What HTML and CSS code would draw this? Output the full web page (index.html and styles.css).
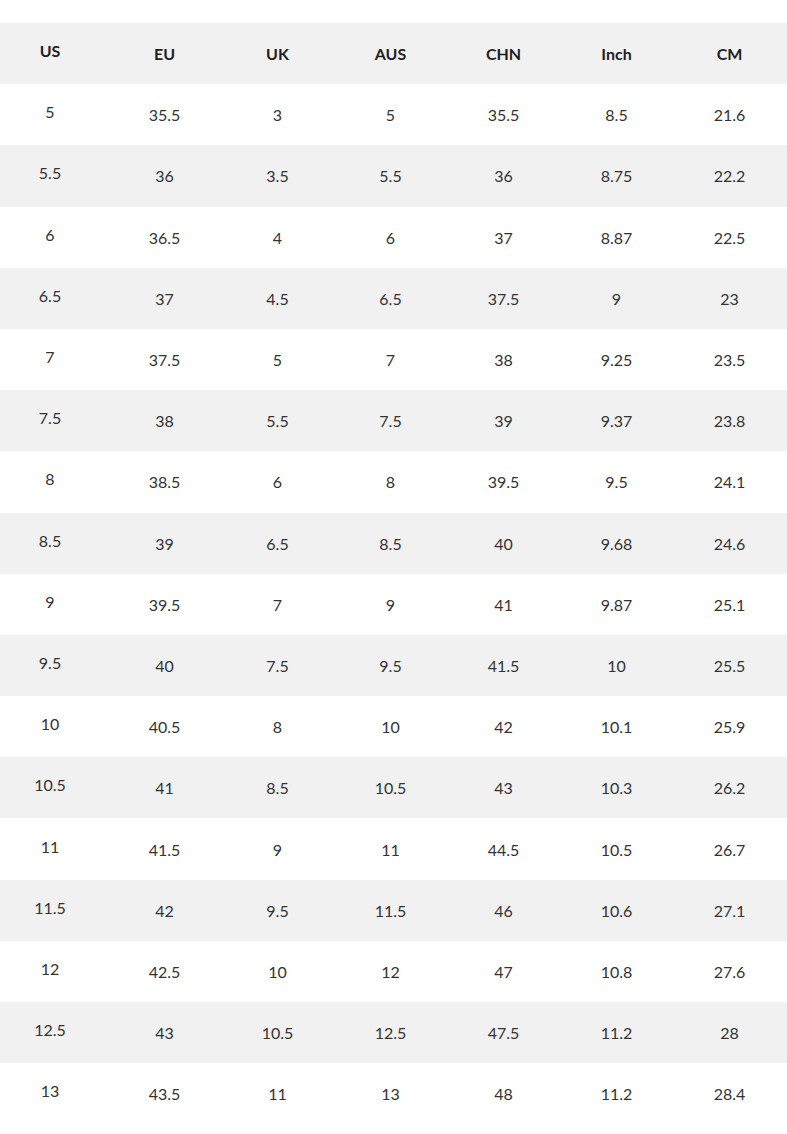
FILE: index.html
```html
<!DOCTYPE html>
<html>
<head>
<meta charset="utf-8">
<link rel="stylesheet" href="styles.css">
</head>
<body>
<div class="table">
  <div class="row head"><div class="c first">US</div><div class="c">EU</div><div class="c">UK</div><div class="c">AUS</div><div class="c">CHN</div><div class="c">Inch</div><div class="c">CM</div></div>
  <div class="row"><div class="c first">5</div><div class="c">35.5</div><div class="c">3</div><div class="c">5</div><div class="c">35.5</div><div class="c">8.5</div><div class="c">21.6</div></div>
  <div class="row alt"><div class="c first">5.5</div><div class="c">36</div><div class="c">3.5</div><div class="c">5.5</div><div class="c">36</div><div class="c">8.75</div><div class="c">22.2</div></div>
  <div class="row"><div class="c first">6</div><div class="c">36.5</div><div class="c">4</div><div class="c">6</div><div class="c">37</div><div class="c">8.87</div><div class="c">22.5</div></div>
  <div class="row alt"><div class="c first">6.5</div><div class="c">37</div><div class="c">4.5</div><div class="c">6.5</div><div class="c">37.5</div><div class="c">9</div><div class="c">23</div></div>
  <div class="row"><div class="c first">7</div><div class="c">37.5</div><div class="c">5</div><div class="c">7</div><div class="c">38</div><div class="c">9.25</div><div class="c">23.5</div></div>
  <div class="row alt"><div class="c first">7.5</div><div class="c">38</div><div class="c">5.5</div><div class="c">7.5</div><div class="c">39</div><div class="c">9.37</div><div class="c">23.8</div></div>
  <div class="row"><div class="c first">8</div><div class="c">38.5</div><div class="c">6</div><div class="c">8</div><div class="c">39.5</div><div class="c">9.5</div><div class="c">24.1</div></div>
  <div class="row alt"><div class="c first">8.5</div><div class="c">39</div><div class="c">6.5</div><div class="c">8.5</div><div class="c">40</div><div class="c">9.68</div><div class="c">24.6</div></div>
  <div class="row"><div class="c first">9</div><div class="c">39.5</div><div class="c">7</div><div class="c">9</div><div class="c">41</div><div class="c">9.87</div><div class="c">25.1</div></div>
  <div class="row alt"><div class="c first">9.5</div><div class="c">40</div><div class="c">7.5</div><div class="c">9.5</div><div class="c">41.5</div><div class="c">10</div><div class="c">25.5</div></div>
  <div class="row"><div class="c first">10</div><div class="c">40.5</div><div class="c">8</div><div class="c">10</div><div class="c">42</div><div class="c">10.1</div><div class="c">25.9</div></div>
  <div class="row alt"><div class="c first">10.5</div><div class="c">41</div><div class="c">8.5</div><div class="c">10.5</div><div class="c">43</div><div class="c">10.3</div><div class="c">26.2</div></div>
  <div class="row"><div class="c first">11</div><div class="c">41.5</div><div class="c">9</div><div class="c">11</div><div class="c">44.5</div><div class="c">10.5</div><div class="c">26.7</div></div>
  <div class="row alt"><div class="c first">11.5</div><div class="c">42</div><div class="c">9.5</div><div class="c">11.5</div><div class="c">46</div><div class="c">10.6</div><div class="c">27.1</div></div>
  <div class="row"><div class="c first">12</div><div class="c">42.5</div><div class="c">10</div><div class="c">12</div><div class="c">47</div><div class="c">10.8</div><div class="c">27.6</div></div>
  <div class="row alt"><div class="c first">12.5</div><div class="c">43</div><div class="c">10.5</div><div class="c">12.5</div><div class="c">47.5</div><div class="c">11.2</div><div class="c">28</div></div>
  <div class="row"><div class="c first">13</div><div class="c">43.5</div><div class="c">11</div><div class="c">13</div><div class="c">48</div><div class="c">11.2</div><div class="c">28.4</div></div>
</div>
</body>
</html>
```
FILE: styles.css
```css
html, body {
  margin: 0;
  padding: 0;
  background: #ffffff;
}
body {
  font-family: "Lato", "Liberation Sans", sans-serif;
  font-size: 16px;
  color: #333333;
  padding-top: 23px;
}
.table {
  display: flex;
  flex-direction: column;
  width: 787px;
}
.row {
  display: grid;
  grid-template-columns: 108px repeat(6, 113px);
  height: 61.2px;
  align-items: center;
  background: #ffffff;
}
.row.alt, .row.head {
  background: #f1f1f1;
}
.head {
  font-weight: 700;
  color: #1e1e1e;
}
.c {
  text-align: center;
  line-height: 18px;
  padding-top: 1px;
}
.c.first {
  padding-right: 8px;
  padding-top: 0;
  margin-top: -5px;
}
```
